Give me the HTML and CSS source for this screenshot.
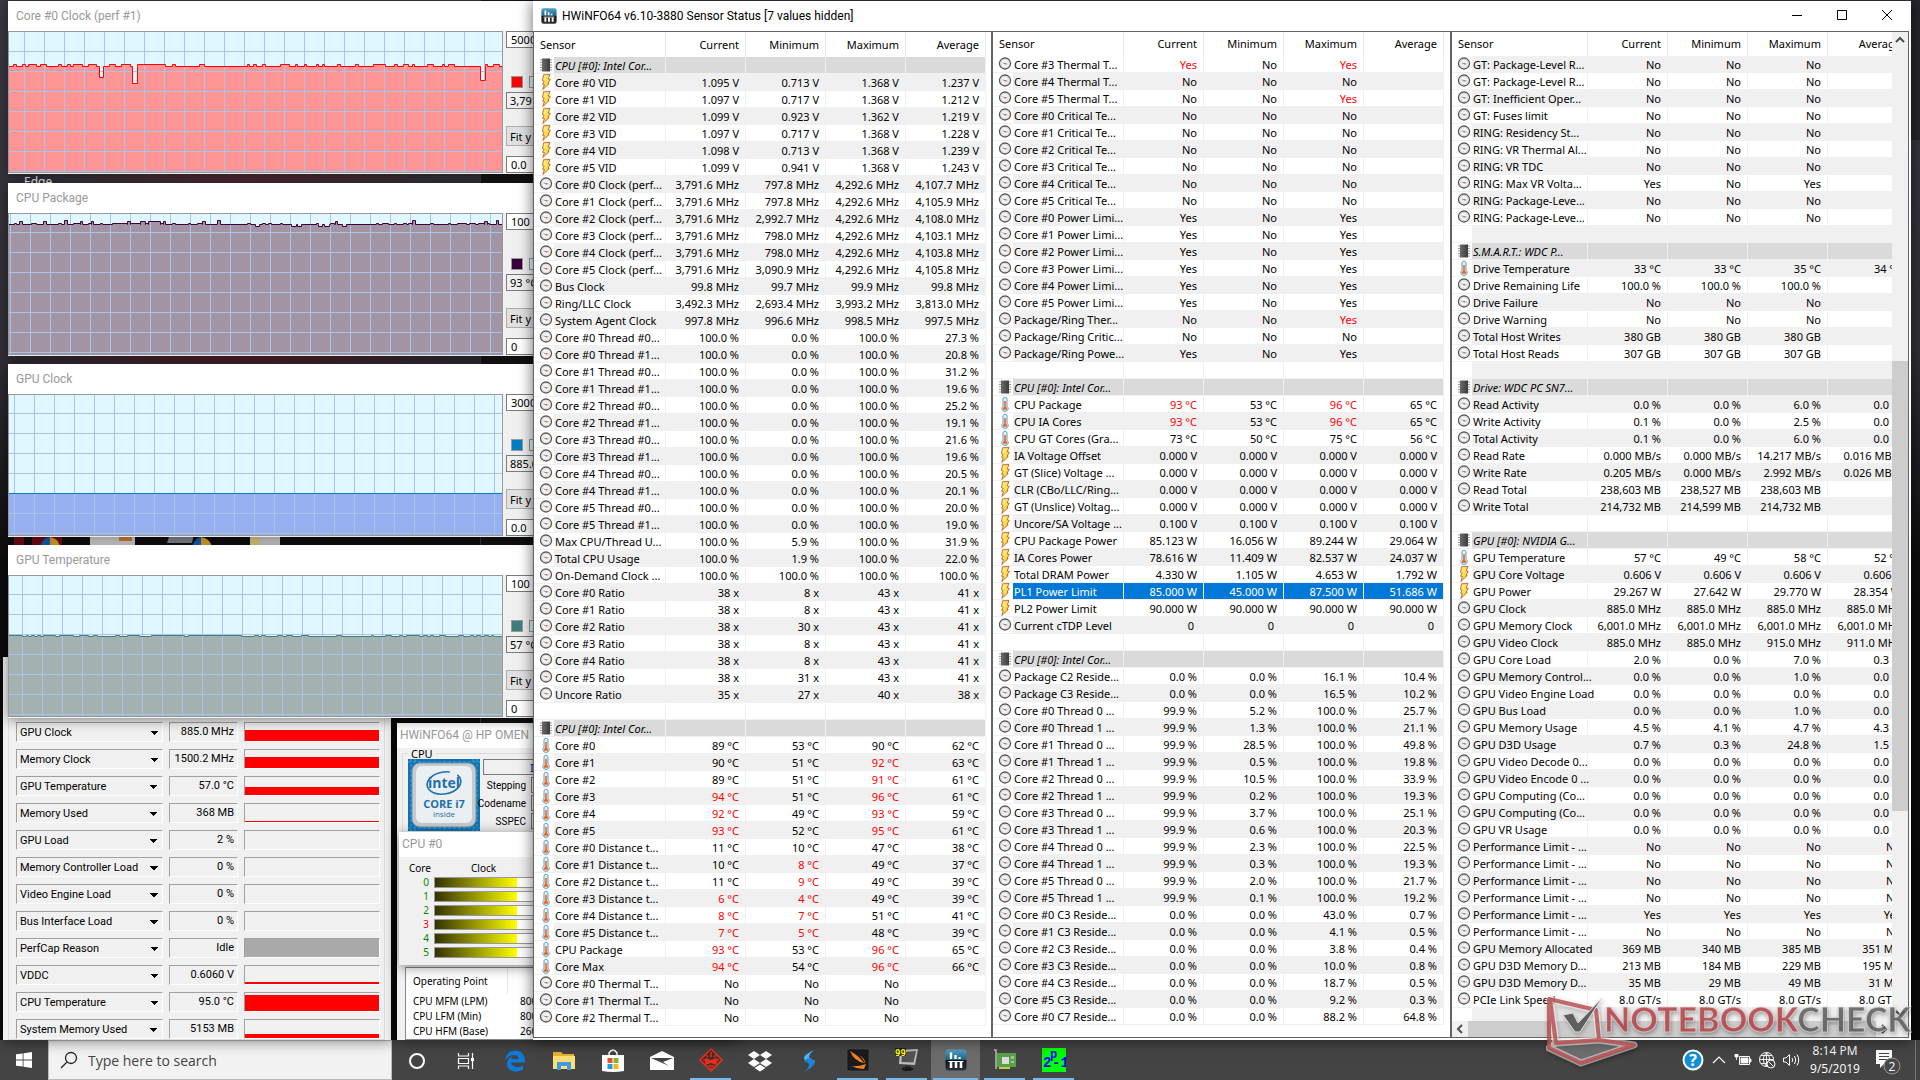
FILE: index.html
```html
<!DOCTYPE html>
<html lang="en">

<head>
    <meta charset="UTF-8">
    <meta name="viewport" content="width=device-width, initial-scale=1.0">
    <title>HWiNFO64 Sensor Status</title>
    <link rel="stylesheet" href="styles.css">
</head>

<body>
    <!-- shared icons -->
    <svg class="sprite" aria-hidden="true">
        <defs>
            <linearGradient id="chip-fill" x1="0" y1="0" x2="1" y2="0">
                <stop offset="0" stop-color="#6a6a6a" />
                <stop offset="1" stop-color="#3c3c3c" />
            </linearGradient>
            <linearGradient id="bolt-fill" x1="0" y1="0" x2="1" y2="1">
                <stop offset="0" stop-color="#fff7a0" />
                <stop offset="1" stop-color="#ffc400" />
            </linearGradient>
            <linearGradient id="app-fill" x1="0" y1="0" x2="0" y2="1">
                <stop offset="0" stop-color="#4fa3c7" />
                <stop offset=".5" stop-color="#1f5f80" />
                <stop offset=".52" stop-color="#101418" />
                <stop offset="1" stop-color="#2b3238" />
            </linearGradient>
        </defs>
        <symbol id="i-clock" viewBox="0 0 16 16">
            <circle cx="8" cy="7.5" r="5.500" fill="#f4f4f4" stroke="#555" stroke-width="1.300" />
            <circle cx="8" cy="7.5" r="4.200" fill="none" stroke="#d4d4d4" stroke-width=".8" />
            <path d="M5.500 6.800L8.500 7.900H10.500" fill="none" stroke="#8a8a8a" stroke-width=".8" />
            <circle cx="8.200" cy="7.800" r=".7" fill="#c0543c" />
        </symbol>
        <symbol id="i-volt" viewBox="0 0 16 16">
            <path d="M5.500 .8L12 .5L10.200 5L12.300 5.300L10 9.300L11.200 9.600L4.800 15.500L6.400 10.600L4.600 10.200L6.200 7.200L4.500 6.600Z"
                fill="url(#bolt-fill)" stroke="#b8622a" stroke-width=".9" />
        </symbol>
        <symbol id="i-temp" viewBox="0 0 16 16">
            <path d="M6 2.400Q8 -.4 10 2.400V10.200Q11.400 11.400 11.200 13Q10.600 15.400 8 15.400Q5.400 15.400 4.800 13Q4.600 11.400 6 10.200Z"
                fill="#e4f3fb" stroke="#5f9cc0" stroke-width="1" />
            <path d="M7.200 5H8.800V10.600L10 12V13.800H6V12L7.200 10.600Z" fill="#f0641e" />
        </symbol>
        <symbol id="i-chip" viewBox="0 0 16 16">
            <path d="M2 3H14M2 5.500H14M2 8H14M2 10.500H14M2 13H14" stroke="#999" stroke-width="1" />
            <rect x="4" y="1.500" width="8" height="13" fill="url(#chip-fill)" />
        </symbol>
        <symbol id="i-app" viewBox="0 0 22 22">
            <rect x=".5" y=".5" width="21" height="21" rx="3" fill="url(#app-fill)" />
            <path d="M6 3.500V10M10.500 6V10M14.500 8V10" stroke="#fff" stroke-width="2.400" />
            <path d="M6 13V19M11 13V19M16 13V19" stroke="#fff" stroke-width="2.600" />
            <path d="M3.500 12.500H18.500" stroke="#fff" stroke-width="1" />
        </symbol>
    </svg>

    <main class="desktop">
        <span class="shortcut-label">Edge</span>
        <svg class="shortcut-strip" width="270" height="12" aria-hidden="true">
            <path d="M0 0H10V12H0ZM18 0H48V12H18Z" fill="#7b0d18" />
            <path d="M26 12Q30 3 36 3V12Z" fill="#1468c4" />
            <path d="M36 3Q44 4 46 12H36Z" fill="#f2b42c" />
            <rect x="76" width="45" height="12" fill="#e4e4e4" />
            <rect x="105" y="3" width="13" height="4" fill="#e48a3c" />
            <path d="M156 0H180L178 9H153Z" fill="#8b9198" />
            <path d="M178 12Q182 3 187 3V12Z" fill="#1468c4" />
            <path d="M187 3Q195 4 198 12H187Z" fill="#f2b42c" />
            <rect x="236" width="10" height="12" fill="#f1dd8d" />
            <rect x="246" width="20" height="12" fill="#dcdcdc" />
        </svg>

        <!-- GPU-Z -->
        <section class="window gpuz">
            <div class="gpuz-group" id="gpuzRows"></div>
        </section>

        <!-- HWiNFO main window -->
        <section class="window summary">
            <h2 class="title inactive">HWiNFO64 @ HP OMEN</h2>
            <fieldset class="cpu-box">
                <legend>CPU</legend>
                <svg class="badge" viewBox="0 0 72 72" role="img" aria-label="Intel Core i7">
                    <rect width="72" height="72" fill="#0f74b4" />
                    <path d="M3 0V72M7 0V72M65 0V72M69 0V72M0 3H72M0 69H72" stroke="#3fa3da" stroke-width="1"
                        stroke-dasharray="3 2" />
                    <rect x="4" y="4" width="64" height="64" rx="8" fill="#c3ccd3" stroke="#7d8f9c" />
                    <rect x="8" y="7" width="56" height="57" rx="6" fill="#eceff1" />
                    <ellipse cx="36" cy="24" rx="17" ry="11" fill="none" stroke="#1a73b4" stroke-width="1.600"
                        stroke-dasharray="74 8" transform="rotate(-10 36 24)" />
                    <text x="36" y="29" class="badge-intel">intel</text>
                    <text x="36" y="49" class="badge-core">CORE i7</text>
                    <text x="36" y="58" class="badge-inside">inside</text>
                </svg>
                <div class="cpu-fields">
                    <input class="cpu-name" type="text" value="Intel" aria-label="CPU name" readonly>
                    <label>Stepping <input type="text" readonly></label>
                    <label>Codename <input type="text" readonly></label>
                    <label>SSPEC <input type="text" readonly></label>
                </div>
            </fieldset>
            <table class="points">
                <tr><th>Operating Point</th><th></th></tr>
                <tr><td>CPU MFM (LPM)</td><td>800</td></tr>
                <tr><td>CPU LFM (Min)</td><td>800</td></tr>
                <tr><td>CPU HFM (Base)</td><td>2600</td></tr>
            </table>
        </section>

        <section class="window cores">
            <h2 class="title inactive">CPU #0</h2>
            <div class="cores-body" id="coreBars">
                <span class="core-head">Core</span><span class="clock-head">Clock</span>
            </div>
        </section>

        <div id="graphs"></div>

        <!-- sensor status -->
        <section class="window sensors">
            <header class="titlebar">
                <svg class="app-icon"><use href="#i-app" /></svg>
                <h1>HWiNFO64 v6.10-3880 Sensor Status [7 values hidden]</h1>
                <button type="button" aria-label="Minimize"><svg width="12" height="12"><path d="M1 6.500H11" stroke="#000" /></svg></button>
                <button type="button" aria-label="Maximize"><svg width="12" height="12"><path d="M1.500 1.500H10.500V10.500H1.500Z" fill="none" stroke="#000" /></svg></button>
                <button type="button" aria-label="Close"><svg width="12" height="12"><path d="M1 1L11 11M11 1L1 11" stroke="#000" /></svg></button>
            </header>
            <div class="panes">
                <div class="pane pane-a"><div class="list" id="paneA"></div></div>
                <div class="pane pane-b"><div class="list" id="paneB"></div></div>
                <div class="pane pane-c">
                    <div class="list" id="paneC"></div>
                    <div class="vscroll">
                        <svg width="16" height="16"><path d="M4 10L8 6L12 10" fill="none" stroke="#505050" stroke-width="2" /></svg>
                        <div class="vthumb"></div>
                        <svg width="16" height="16"><path d="M4 6L8 10L12 6" fill="none" stroke="#505050" stroke-width="2" /></svg>
                    </div>
                    <div class="hscroll">
                        <svg width="16" height="16"><path d="M10 4L6 8L10 12" fill="none" stroke="#505050" stroke-width="2" /></svg>
                        <div class="hthumb"></div>
                        <svg width="16" height="16"><path d="M6 4L10 8L6 12" fill="none" stroke="#505050" stroke-width="2" /></svg>
                    </div>
                </div>
            </div>
        </section>

        <div class="watermark">
            <svg width="92" height="72" viewBox="0 0 92 72" aria-hidden="true">
                <path d="M3 3L50 14L53 44L88 49L35 67L3 52Z" fill="#fff" opacity=".25" />
                <g fill="none" stroke="#fff" stroke-width="7" stroke-linejoin="round" opacity=".5">
                    <path d="M3 3L50 14L53 44L10 47L4 3ZM10 47L3 52L35 67L88 49L53 44" />
                </g>
                <g fill="none" stroke="#b8484c" stroke-width="4" stroke-linejoin="round" opacity=".8">
                    <path d="M3 3L50 14L53 44L10 47L4 3ZM3 3V52L35 67L88 49L53 44" />
                </g>
                <path d="M17 19L27 17L32 27L56 2L34 36L29 36Z" fill="#5e5e5e" stroke="#ddd" />
            </svg>
            <span class="wm-text"><b>NOTEBOOK</b>CHECK</span>
        </div>
    </main>

    <footer class="taskbar">
        <button class="start" type="button" aria-label="Start">
            <svg width="16" height="16"><path d="M0 2.300L6.700 1.400V7.600H0ZM7.500 1.300L16 0V7.600H7.500ZM0 8.400H6.700V14.600L0 13.700ZM7.500 8.400H16V16L7.500 14.700Z" fill="#fff" /></svg>
        </button>
        <label class="search">
            <svg width="18" height="18"><circle cx="11" cy="7" r="5.500" fill="none" stroke="#222" stroke-width="1.300" /><path d="M7 11L1 17" stroke="#222" stroke-width="1.300" /></svg>
            <input type="text" placeholder="Type here to search" aria-label="Search">
        </label>
        <nav class="apps">
            <button type="button" aria-label="Cortana"><svg viewBox="0 0 24 24"><circle cx="12" cy="12" r="7" fill="none" stroke="#fff" stroke-width="2" /></svg></button>
            <button type="button" aria-label="Task View"><svg viewBox="0 0 24 24"><path d="M4.500 4V7H14.500V4M4.500 20V17H14.500V20M4.500 9.500H14.500V14.500H4.500ZM18.500 4V20" fill="none" stroke="#fff" stroke-width="1.200" /><path d="M17 9H20V12H17Z" fill="#fff" /></svg></button>
            <button type="button" aria-label="Edge"><svg viewBox="0 0 24 24"><path d="M2 11.500C3 4 8 1.500 12.500 1.500C18.500 1.500 21.700 6 21.700 10.500V13.500H8.300C8.600 17.800 14.500 19.600 20 16.500V20.700C14 24 4 22.800 4 14.500C4 11 6.500 8.200 9.500 6.800C8.600 7.900 8.300 9 8.200 9.900H15.500C15.500 4.500 6 4.500 2 11.500Z" fill="#0e7bdb" /></svg></button>
            <button type="button" aria-label="File Explorer"><svg viewBox="0 0 24 24"><path d="M1 3H9L11 5H22V20H1Z" fill="#e9b334" /><path d="M1 7H23V20H1Z" fill="#ffdd77" /><path d="M5 21V13H19V21H15V17H9V21Z" fill="#3f9be0" /></svg></button>
            <button type="button" aria-label="Store"><svg viewBox="0 0 24 24"><path d="M8 7V4Q12 -2 16 4V7" fill="none" stroke="#fff" stroke-width="1.400" /><path d="M1 6H23V22Q12 24 1 22Z" fill="#fff" /><path d="M6.500 9H11.500V14H6.500Z" fill="#e8502c" /><path d="M12.500 9H17.500V14H12.500Z" fill="#7fb72b" /><path d="M6.500 15H11.500V20H6.500Z" fill="#1d9fe6" /><path d="M12.500 15H17.500V20H12.500Z" fill="#fcb813" /></svg></button>
            <button type="button" aria-label="Mail"><svg viewBox="0 0 24 24"><path d="M0 8L12 2L24 8V21H0Z" fill="#fff" /><path d="M1 9H23L13 13L19 17Z" fill="#444" /></svg></button>
            <button class="running" type="button" aria-label="Omen"><svg viewBox="0 0 24 24"><path d="M12 1L23 12L12 23L1 12Z" fill="#4a2a2a" stroke="#e2311d" stroke-width="1.600" /><path d="M12 4V9M7 7L9 9M17 7L15 9M4 12H7M17 12H20M7 11L12 13L17 11V16L12 14L7 16ZM9 18H15M10.500 20.500H13.500" fill="#e2311d" stroke="#e2311d" stroke-width="1.600" /></svg></button>
            <button type="button" aria-label="Dropbox"><svg viewBox="0 0 24 24"><path d="M6 2L12 6L6 10L0 6ZM18 2L24 6L18 10L12 6ZM6 10L12 14L6 18L0 14ZM18 10L24 14L18 18L12 14ZM12 15.500L17.500 19L12 22.500L6.500 19Z" fill="#fff" /></svg></button>
            <button type="button" aria-label="Bolt"><svg viewBox="0 0 24 24"><path d="M17 1Q6 6 7 10Q8 12 14 15L18 12Q12 9 12 8Q12 5 17 1Z" fill="#4db8f8" /><path d="M7 23Q18 17 18 13Q17 11 11 9L7 12Q13 14 12 16Q12 19 7 23Z" fill="#1d83dc" /></svg></button>
            <button class="running" type="button" aria-label="3DMark"><svg viewBox="0 0 24 24"><rect x="1" y="1" width="22" height="22" fill="#1c1b1b" stroke="#555" stroke-width=".6" /><path d="M4 3Q8 13 18 15Q13 8 4 3ZM13 7Q18 11 19 16Q20 11 13 7ZM5 18Q12 19 20 16L18 21Q11 21 5 18Z" fill="#f58220" /></svg></button>
            <button class="running" type="button" aria-label="RivaTuner"><svg viewBox="0 0 24 24"><path d="M5 2L23 1L20 17L4 16Z" fill="#b9bdc0" /><path d="M7 4L21 3L18.500 14.500L6.500 14Z" fill="#505457" /><path d="M10 17H15V20H10Z" fill="#333" /><ellipse cx="12.500" cy="21" rx="6" ry="2" fill="#1b1b1b" /><rect width="11" height="8" fill="#222" /><text x="0" y="8" class="fps">99</text></svg></button>
            <button class="running active" type="button" aria-label="HWiNFO64"><svg viewBox="0 0 24 24"><use href="#i-app" x="1" y="1" width="22" height="22" /></svg></button>
            <button class="running" type="button" aria-label="GPU-Z"><svg viewBox="0 0 24 24"><path d="M1 2H3V21" fill="none" stroke="#bbb" stroke-width="1.500" /><rect x="4" y="5" width="19" height="14" fill="#58a04c" /><rect x="6" y="19" width="11" height="2" fill="#c8cf40" /><rect x="9" y="9" width="7" height="7" fill="#dcdcdc" /><path d="M18 8H21V11H18ZM18 13H21V15H18Z" fill="#9bc794" /></svg></button>
            <button class="running" type="button" aria-label="Prime95"><svg viewBox="0 0 24 24"><rect width="24" height="24" fill="#0f0" /><text x="1" y="19" class="prime">2</text><text x="8" y="10" class="prime small">p</text><text x="10" y="19" class="prime">-1</text></svg></button>
        </nav>
        <div class="tray">
            <svg class="help" width="22" height="22"><circle cx="11" cy="11" r="9.500" fill="#1290d8" stroke="#fff" stroke-width="2" /><text x="11" y="17" class="help-mark">?</text></svg>
            <svg width="18" height="14"><path d="M3 10L9 4L15 10" fill="none" stroke="#fff" stroke-width="1.200" /></svg>
            <svg width="18" height="16"><path d="M5.500 4.500H15.500V12.500H5.500Z" fill="none" stroke="#fff" /><path d="M7 6H14V11H7ZM16 7H17V10H16ZM1 2V5H4V2M2.500 5V8" fill="#fff" stroke="#fff" stroke-width=".8" /></svg>
            <svg width="18" height="18"><circle cx="8.500" cy="8.500" r="7" fill="none" stroke="#fff" /><path d="M1.500 8.500H15.500M8.500 1.500V15.500M8.500 1.500Q2 8.500 8.500 15.500M8.500 1.500Q15 8.500 8.500 15.500M3 4.500H14M3 12.500H9" fill="none" stroke="#fff" stroke-width=".9" /><circle cx="13" cy="13" r="4" fill="#444" stroke="#fff" /><path d="M10.500 10.500L15.500 15.500" stroke="#fff" /></svg>
            <svg width="18" height="16"><path d="M1.500 6H4L7.500 2.500V13.500L4 10H1.500ZM10 6Q11.500 8 10 10M12.500 4Q15 8 12.500 12M15 2.500Q18.500 8 15 13.500" fill="none" stroke="#fff" /></svg>
            <div class="time"><span>8:14 PM</span><span>9/5/2019</span></div>
            <svg class="notes" width="26" height="28"><path d="M1 2H17V16H9L5 20V16H1Z" fill="#fff" /><path d="M4 5.500H14M4 8.500H14M4 11.500H14" stroke="#444" /><circle cx="17" cy="18" r="8" fill="#484848" stroke="#999" /><text x="17" y="23" class="notes-count">2</text></svg>
            <span class="peek"></span>
        </div>
    </footer>

    <script src="script.js"></script>
</body>

</html>
```
FILE: styles.css
```css
* {
    box-sizing: border-box;
}

body {
    margin: 0;
    height: 100vh;
    display: flex;
    flex-direction: column;
    overflow: hidden;
    font-family: "Noto Sans", "Open Sans", sans-serif;
    font-size: 11px;
    color: #000;
    background: #0b0a0c;
}

h1,
h2 {
    margin: 0;
    font-weight: 400;
}

button {
    font-family: inherit;
    padding: 0;
    border: none;
    background: none;
}

.sprite {
    position: absolute;
    width: 0;
    height: 0;
}

/* desktop */
.desktop {
    position: relative;
    flex: 1;
    min-height: 0;
    overflow: hidden;
    background:
        linear-gradient(#26252d, #26252d) right top / 9px 140px no-repeat,
        linear-gradient(90deg, transparent 480px, #3a3a3a 480px, #3a3a3a 481px, #161616 481px, #161616 533px, transparent 533px),
        radial-gradient(200px 8px at 250px 179px, #5a2a33, transparent),
        radial-gradient(220px 8px at 240px 359px, #5a1f28, transparent),
        linear-gradient(180deg, #3a3743 0, #332f38 350px, #0e0c0e 560px, #0a0a0a 100%);
}

.shortcut-label {
    position: absolute;
    left: 24px;
    top: 173px;
    font-size: 12px;
    color: #fff;
}

.shortcut-strip {
    position: absolute;
    left: 14px;
    top: 534px;
}

.window {
    position: absolute;
    background: #f0f0f0;
    box-shadow: 0 2px 12px rgba(0, 0, 0, .45);
    overflow: hidden;
}

.title {
    height: 30px;
    padding-left: 8px;
    font-family: Roboto, sans-serif;
    font-size: 12px;
    line-height: 30px;
    white-space: nowrap;
    background: #fff;
}

.inactive {
    color: #999;
}

/* graph windows */
.graph {
    left: 8px;
    width: 540px;
    height: 173px;
}

.graph-body {
    display: flex;
    gap: 3px;
}

.plot {
    flex: none;
    width: 495px;
    height: 142px;
    border: 1px solid #999;
    background: #e0f7ff;
}

.plot svg {
    display: block;
    width: 100%;
    height: 100%;
}

.plot-side {
    display: flex;
    flex: none;
    flex-direction: column;
    width: 90px;
}

.plot-side input {
    width: 90px;
    height: 17px;
    padding: 0 4px;
    border: 1px solid #7a7a7a;
    font-family: inherit;
    font-size: 11px;
    background: #fff;
}

.plot-side .now {
    padding: 0 3px;
    background: #f0f0f0;
}

.swatches {
    display: flex;
    gap: 6px;
    padding: 28px 0 4px 5px;
}

.swatches span {
    width: 12px;
    height: 12px;
    border: 1px solid #999;
    background: #e0f7ff;
}

.plot-side button {
    width: 60px;
    height: 20px;
    margin: 17px 0 10px;
    padding-left: 3px;
    border: 1px solid #adadad;
    font-size: 11px;
    text-align: left;
    background: #e1e1e1;
}

/* gpu-z */
.gpuz {
    left: 3px;
    top: 657px;
    bottom: 0;
    width: 388px;
    padding: 30px 6px 0 5px;
}

.gpuz-group {
    display: grid;
    gap: 7px;
    padding: 34px 4px 0 7px;
    border: 1px solid #dcdcdc;
}

.gpuz-row {
    display: grid;
    grid-template-columns: 147px 69px 1fr;
    gap: 6px;
    height: 20px;
    font-family: Roboto, sans-serif;
    font-size: 11px;
}

.gpuz-row > * {
    border: 1px solid;
    border-color: #a0a0a0 #fff #fff #a0a0a0;
}

.gpuz-row select {
    appearance: none;
    width: 100%;
    padding: 0 3px;
    border-radius: 0;
    font-family: inherit;
    font-size: 11px;
    color: #000;
    background:
        linear-gradient(45deg, transparent 50%, #000 50%) 133px 8px / 4px 4px no-repeat,
        linear-gradient(-45deg, transparent 50%, #000 50%) 137px 8px / 4px 4px no-repeat,
        #f0f0f0;
}

.gpuz-row output {
    padding-right: 3px;
    line-height: 18px;
    text-align: right;
}

.gauge {
    display: flex;
    align-items: flex-end;
}

.gauge i {
    width: 100%;
    background: red;
}

.gauge .idle {
    background: #a9a9a9;
}

/* hwinfo summary */
.summary {
    left: 397px;
    top: 723px;
    bottom: 0;
    width: 340px;
}

.summary .title {
    height: 25px;
    padding-left: 3px;
    line-height: 24px;
}

.cpu-box {
    display: flex;
    height: 86px;
    margin: 0 5px;
    padding: 0 5px;
    border: 1px solid #dcdcdc;
}

.cpu-box legend {
    padding: 0 3px;
    line-height: 11px;
}

.badge {
    width: 72px;
    height: 72px;
}

.badge text {
    text-anchor: middle;
    font-family: "Open Sans", sans-serif;
    fill: #1a6fae;
}

.badge-intel {
    font-size: 14px;
    font-weight: 700;
}

.badge-core {
    font-size: 11px;
    font-weight: 700;
}

.badge-inside {
    font-size: 8px;
}

.cpu-fields {
    display: grid;
    grid-template-rows: 17px 18px 18px 18px;
    padding-left: 3px;
}

.cpu-fields input {
    width: 160px;
    height: 16px;
    border: 1px solid #7a7a7a;
    padding: 0 0 0 46px;
    font-family: inherit;
    font-size: 11px;
    color: #00c;
    background: #f0f0f0;
}

.cpu-fields label {
    display: grid;
    grid-template-columns: 43px 160px;
    gap: 5px;
    align-items: center;
    justify-items: end;
    font-family: Roboto, sans-serif;
    font-size: 10px;
}

.points {
    width: 300px;
    margin: 133px 0 0 8px;
    border: 1px solid #828790;
    border-spacing: 0;
    table-layout: fixed;
    background: #fff;
}

.points th,
.points td {
    height: 15px;
    padding: 0 0 0 7px;
    font-size: 10px;
    font-weight: 400;
    line-height: 15px;
    text-align: left;
}

.points th {
    height: 26px;
    border-right: 1px solid #e5e5e5;
}

.points th:first-child {
    width: 102px;
}

.points td + td {
    padding-left: 12px;
}

/* per core clocks */
.cores {
    left: 399px;
    top: 832px;
    width: 300px;
    height: 133px;
}

.cores .title {
    height: 25px;
    padding-left: 3px;
    line-height: 24px;
}

.cores-body {
    display: grid;
    grid-template-columns: 20px 160px;
    grid-template-rows: 17px;
    grid-auto-rows: 11px;
    gap: 3px 5px;
    padding-left: 10px;
    font-size: 10px;
    line-height: 11px;
}

.core-head,
.clock-head {
    line-height: 22px;
}

.clock-head {
    padding-left: 37px;
}

.core-no {
    text-align: right;
    color: #008c00;
}

.core-no.hot {
    color: red;
}

.core-bar {
    border: 1px solid #999;
    background: linear-gradient(90deg, #330 0, #ff0 82px, #fff 82px);
}

/* sensor window */
.sensors {
    left: 533px;
    right: 9px;
    top: 1px;
    bottom: 0;
    display: flex;
    flex-direction: column;
    padding: 0 2px 2px 0;
    background: #fff;
    box-shadow: 0 0 14px rgba(0, 0, 0, .6);
}

.titlebar {
    display: flex;
    align-items: center;
    height: 30px;
    padding-left: 8px;
}

.app-icon {
    width: 16px;
    height: 16px;
    margin-right: 5px;
}

.titlebar h1 {
    flex: 1;
    font-family: Roboto, sans-serif;
    font-size: 12px;
}

.titlebar button {
    width: 45px;
    height: 30px;
}

.panes {
    flex: 1;
    min-height: 0;
    display: grid;
    grid-template-columns: 458fr 459fr 459fr;
    grid-template-rows: minmax(0, 1fr);
    border-top: 1px solid #646464;
    border-bottom: 1px solid #646464;
}

.pane {
    min-width: 0;
    border-left: 2px solid #646464;
    overflow: hidden;
}

.pane-a {
    border-left-width: 1px;
}

.list {
    min-width: 0;
    overflow: hidden;
}

.sensor-table {
    width: 452px;
    border-spacing: 0;
    table-layout: fixed;
}

.sensor-table th {
    height: 24px;
    padding: 0 6px 0 0;
    border-right: 1px solid #e5e5e5;
    font-weight: 400;
    line-height: 22px;
    text-align: right;
}

.pane-a .sensor-table th {
    height: 25px;
}

.sensor-table th:first-child {
    padding-left: 6px;
    text-align: left;
}

.col-icon {
    width: 20px;
}

.col-name {
    width: 112px;
}

.pane-b .col-name {
    width: 111px;
}

.pane-b .sensor-table {
    width: 451px;
}

.pane-c .col-name {
    width: 116px;
}

.pane-c .sensor-table {
    width: 456px;
}

.sensor-table td {
    height: 17px;
    padding: 1px 6px 0 0;
    border-right: 1px solid #f0f0f0;
    border-bottom: 1px solid #f0f0f0;
    line-height: 15px;
    text-align: right;
    white-space: nowrap;
}

.sensor-table .icon {
    padding: 0 0 0 4px;
    border-right: none;
    background: #fff;
}

.icon svg {
    display: block;
    width: 16px;
    height: 16px;
}

.sensor-table .name {
    padding-left: 1px;
    padding-right: 0;
    text-align: left;
}

.shade td {
    background: #f0f0f0;
}

.group td {
    background: #dadada;
}

.group .name {
    font-style: italic;
}

.selected td {
    color: #fff;
    background: #0078d7;
}

.sensor-table .hot {
    color: red;
}

.pane-c {
    display: grid;
    grid-template-columns: minmax(0, 1fr) 16px;
    grid-template-rows: minmax(0, 1fr) 16px;
    border-right: 1px solid #646464;
}

.vscroll,
.hscroll {
    display: flex;
    background: #f0f0f0;
}

.vscroll {
    flex-direction: column;
}

.hscroll {
    grid-column: span 2;
    padding-right: 16px;
}

.vthumb {
    flex: 1;
    margin: 313px 0 194px;
    background: #cdcdcd;
}

.hthumb {
    flex: 1;
    background: #cdcdcd;
}

.watermark {
    position: absolute;
    right: 9px;
    bottom: -28px;
    z-index: 5;
    height: 72px;
    display: flex;
    filter: drop-shadow(1px 2px 2px rgba(0, 0, 0, .4));
}

.wm-text {
    margin-left: -34px;
    padding-top: 3px;
    font-family: Lato, sans-serif;
    font-size: 34px;
    font-weight: 900;
    line-height: 40px;
    color: rgba(90, 90, 90, .8);
    -webkit-text-stroke: 1px rgba(235, 235, 235, .6);
}

.wm-text b {
    font-weight: 900;
    color: rgba(185, 70, 75, .85);
}

/* taskbar */
.taskbar {
    position: relative;
    display: flex;
    height: 40px;
    color: #fff;
    background: #444;
}

/* the watermark hangs over the taskbar */
.desktop {
    overflow: visible;
    z-index: 1;
}

.start {
    width: 48px;
    height: 40px;
}

.start svg {
    display: block;
    margin: 0 auto;
}

.search {
    display: flex;
    align-items: center;
    gap: 8px;
    width: 344px;
    padding-left: 11px;
    border: 1px solid #bbb;
    background: #f2f2f2;
}

.search input {
    flex: 1;
    min-width: 0;
    border: none;
    font-family: "Open Sans", sans-serif;
    font-size: 14px;
    background: none;
}

.search input::placeholder {
    color: #444;
}

.apps {
    display: flex;
    flex: 1;
}

.apps button {
    width: 49px;
    height: 40px;
    padding: 0 4px;
}

.apps svg {
    display: block;
    width: 24px;
    height: 24px;
    margin: 8px auto 6px;
}

.running::after {
    content: "";
    display: block;
    height: 2px;
    background: #76b9ed;
}

.apps .active {
    padding: 0 2px;
    background: #6c6c6c;
}

.fps {
    font: 700 9px "DejaVu Sans Mono", monospace;
    fill: #ff0;
}

.prime {
    font: 700 14px "Liberation Mono", monospace;
    fill: #00f;
}

.prime.small {
    font-size: 12px;
}

.tray {
    display: flex;
    align-items: center;
    gap: 6px;
}

.help-mark {
    font: 700 16px "Open Sans", sans-serif;
    text-anchor: middle;
    fill: #fff;
}

.time {
    display: flex;
    flex-direction: column;
    width: 58px;
    font-family: "Open Sans", sans-serif;
    font-size: 12px;
    line-height: 18px;
    text-align: center;
}

.notes {
    margin: 4px 8px 0 5px;
}

.notes-count {
    font: 12px "Open Sans", sans-serif;
    text-anchor: middle;
    fill: #fff;
}

.peek {
    width: 5px;
    height: 40px;
    border-left: 1px solid #777;
}
```
FILE: script.js
```js
// icon | name | current | minimum | maximum | average   (! marks a value over its limit)
const paneA = `
chip|CPU [#0]: Intel Cor...
volt|Core #0 VID|1.095 V|0.713 V|1.368 V|1.237 V
volt|Core #1 VID|1.097 V|0.717 V|1.368 V|1.212 V
volt|Core #2 VID|1.099 V|0.923 V|1.362 V|1.219 V
volt|Core #3 VID|1.097 V|0.717 V|1.368 V|1.228 V
volt|Core #4 VID|1.098 V|0.713 V|1.368 V|1.239 V
volt|Core #5 VID|1.099 V|0.941 V|1.368 V|1.243 V
clock|Core #0 Clock (perf...|3,791.6 MHz|797.8 MHz|4,292.6 MHz|4,107.7 MHz
clock|Core #1 Clock (perf...|3,791.6 MHz|797.8 MHz|4,292.6 MHz|4,105.9 MHz
clock|Core #2 Clock (perf...|3,791.6 MHz|2,992.7 MHz|4,292.6 MHz|4,108.0 MHz
clock|Core #3 Clock (perf...|3,791.6 MHz|798.0 MHz|4,292.6 MHz|4,103.1 MHz
clock|Core #4 Clock (perf...|3,791.6 MHz|798.0 MHz|4,292.6 MHz|4,103.8 MHz
clock|Core #5 Clock (perf...|3,791.6 MHz|3,090.9 MHz|4,292.6 MHz|4,105.8 MHz
clock|Bus Clock|99.8 MHz|99.7 MHz|99.9 MHz|99.8 MHz
clock|Ring/LLC Clock|3,492.3 MHz|2,693.4 MHz|3,993.2 MHz|3,813.0 MHz
clock|System Agent Clock|997.8 MHz|996.6 MHz|998.5 MHz|997.5 MHz
clock|Core #0 Thread #0...|100.0 %|0.0 %|100.0 %|27.3 %
clock|Core #0 Thread #1...|100.0 %|0.0 %|100.0 %|20.8 %
clock|Core #1 Thread #0...|100.0 %|0.0 %|100.0 %|31.2 %
clock|Core #1 Thread #1...|100.0 %|0.0 %|100.0 %|19.6 %
clock|Core #2 Thread #0...|100.0 %|0.0 %|100.0 %|25.2 %
clock|Core #2 Thread #1...|100.0 %|0.0 %|100.0 %|19.1 %
clock|Core #3 Thread #0...|100.0 %|0.0 %|100.0 %|21.6 %
clock|Core #3 Thread #1...|100.0 %|0.0 %|100.0 %|19.6 %
clock|Core #4 Thread #0...|100.0 %|0.0 %|100.0 %|20.5 %
clock|Core #4 Thread #1...|100.0 %|0.0 %|100.0 %|20.1 %
clock|Core #5 Thread #0...|100.0 %|0.0 %|100.0 %|20.0 %
clock|Core #5 Thread #1...|100.0 %|0.0 %|100.0 %|19.0 %
clock|Max CPU/Thread U...|100.0 %|5.9 %|100.0 %|31.9 %
clock|Total CPU Usage|100.0 %|1.9 %|100.0 %|22.0 %
clock|On-Demand Clock ...|100.0 %|100.0 %|100.0 %|100.0 %
clock|Core #0 Ratio|38 x|8 x|43 x|41 x
clock|Core #1 Ratio|38 x|8 x|43 x|41 x
clock|Core #2 Ratio|38 x|30 x|43 x|41 x
clock|Core #3 Ratio|38 x|8 x|43 x|41 x
clock|Core #4 Ratio|38 x|8 x|43 x|41 x
clock|Core #5 Ratio|38 x|31 x|43 x|41 x
clock|Uncore Ratio|35 x|27 x|40 x|38 x
-
chip|CPU [#0]: Intel Cor...
temp|Core #0|89 °C|53 °C|90 °C|62 °C
temp|Core #1|90 °C|51 °C|!92 °C|63 °C
temp|Core #2|89 °C|51 °C|!91 °C|61 °C
temp|Core #3|!94 °C|51 °C|!96 °C|61 °C
temp|Core #4|!92 °C|49 °C|!93 °C|59 °C
temp|Core #5|!93 °C|52 °C|!95 °C|61 °C
temp|Core #0 Distance t...|11 °C|10 °C|47 °C|38 °C
temp|Core #1 Distance t...|10 °C|!8 °C|49 °C|37 °C
temp|Core #2 Distance t...|11 °C|!9 °C|49 °C|39 °C
temp|Core #3 Distance t...|!6 °C|!4 °C|49 °C|39 °C
temp|Core #4 Distance t...|!8 °C|!7 °C|51 °C|41 °C
temp|Core #5 Distance t...|!7 °C|!5 °C|48 °C|39 °C
temp|CPU Package|!93 °C|53 °C|!96 °C|65 °C
temp|Core Max|!94 °C|54 °C|!96 °C|66 °C
clock|Core #0 Thermal T...|No|No|No|
clock|Core #1 Thermal T...|No|No|No|
clock|Core #2 Thermal T...|No|No|No|
`;

const paneB = `
clock|Core #3 Thermal T...|!Yes|No|!Yes|
clock|Core #4 Thermal T...|No|No|No|
clock|Core #5 Thermal T...|No|No|!Yes|
clock|Core #0 Critical Te...|No|No|No|
clock|Core #1 Critical Te...|No|No|No|
clock|Core #2 Critical Te...|No|No|No|
clock|Core #3 Critical Te...|No|No|No|
clock|Core #4 Critical Te...|No|No|No|
clock|Core #5 Critical Te...|No|No|No|
clock|Core #0 Power Limi...|Yes|No|Yes|
clock|Core #1 Power Limi...|Yes|No|Yes|
clock|Core #2 Power Limi...|Yes|No|Yes|
clock|Core #3 Power Limi...|Yes|No|Yes|
clock|Core #4 Power Limi...|Yes|No|Yes|
clock|Core #5 Power Limi...|Yes|No|Yes|
clock|Package/Ring Ther...|No|No|!Yes|
clock|Package/Ring Critic...|No|No|No|
clock|Package/Ring Powe...|Yes|No|Yes|
-
chip|CPU [#0]: Intel Cor...
temp|CPU Package|!93 °C|53 °C|!96 °C|65 °C
temp|CPU IA Cores|!93 °C|53 °C|!96 °C|65 °C
temp|CPU GT Cores (Gra...|73 °C|50 °C|75 °C|56 °C
volt|IA Voltage Offset|0.000 V|0.000 V|0.000 V|0.000 V
volt|GT (Slice) Voltage ...|0.000 V|0.000 V|0.000 V|0.000 V
volt|CLR (CBo/LLC/Ring...|0.000 V|0.000 V|0.000 V|0.000 V
volt|GT (Unslice) Voltag...|0.000 V|0.000 V|0.000 V|0.000 V
volt|Uncore/SA Voltage ...|0.100 V|0.100 V|0.100 V|0.100 V
volt|CPU Package Power|85.123 W|16.056 W|89.244 W|29.064 W
volt|IA Cores Power|78.616 W|11.409 W|82.537 W|24.037 W
volt|Total DRAM Power|4.330 W|1.105 W|4.653 W|1.792 W
volt|*PL1 Power Limit|85.000 W|45.000 W|87.500 W|51.686 W
volt|PL2 Power Limit|90.000 W|90.000 W|90.000 W|90.000 W
clock|Current cTDP Level|0&nbsp;|0&nbsp;|0&nbsp;|0&nbsp;
-
chip|CPU [#0]: Intel Cor...
clock|Package C2 Reside...|0.0 %|0.0 %|16.1 %|10.4 %
clock|Package C3 Reside...|0.0 %|0.0 %|16.5 %|10.2 %
clock|Core #0 Thread 0 ...|99.9 %|5.2 %|100.0 %|25.7 %
clock|Core #0 Thread 1 ...|99.9 %|1.3 %|100.0 %|21.1 %
clock|Core #1 Thread 0 ...|99.9 %|28.5 %|100.0 %|49.8 %
clock|Core #1 Thread 1 ...|99.9 %|0.5 %|100.0 %|19.8 %
clock|Core #2 Thread 0 ...|99.9 %|10.5 %|100.0 %|33.9 %
clock|Core #2 Thread 1 ...|99.9 %|0.2 %|100.0 %|19.3 %
clock|Core #3 Thread 0 ...|99.9 %|3.7 %|100.0 %|25.1 %
clock|Core #3 Thread 1 ...|99.9 %|0.6 %|100.0 %|20.3 %
clock|Core #4 Thread 0 ...|99.9 %|2.3 %|100.0 %|22.5 %
clock|Core #4 Thread 1 ...|99.9 %|0.3 %|100.0 %|19.3 %
clock|Core #5 Thread 0 ...|99.9 %|2.0 %|100.0 %|21.7 %
clock|Core #5 Thread 1 ...|99.9 %|0.1 %|100.0 %|19.2 %
clock|Core #0 C3 Reside...|0.0 %|0.0 %|43.0 %|0.7 %
clock|Core #1 C3 Reside...|0.0 %|0.0 %|4.1 %|0.5 %
clock|Core #2 C3 Reside...|0.0 %|0.0 %|3.8 %|0.4 %
clock|Core #3 C3 Reside...|0.0 %|0.0 %|10.0 %|0.8 %
clock|Core #4 C3 Reside...|0.0 %|0.0 %|18.7 %|0.5 %
clock|Core #5 C3 Reside...|0.0 %|0.0 %|9.2 %|0.3 %
clock|Core #0 C7 Reside...|0.0 %|0.0 %|88.2 %|64.8 %
`;

const paneC = `
clock|GT: Package-Level R...|No|No|No|
clock|GT: Package-Level R...|No|No|No|
clock|GT: Inefficient Oper...|No|No|No|
clock|GT: Fuses limit|No|No|No|
clock|RING: Residency St...|No|No|No|
clock|RING: VR Thermal Al...|No|No|No|
clock|RING: VR TDC|No|No|No|
clock|RING: Max VR Volta...|Yes|No|Yes|
clock|RING: Package-Leve...|No|No|No|
clock|RING: Package-Leve...|No|No|No|
-
chip|S.M.A.R.T.: WDC P...
temp|Drive Temperature|33 °C|33 °C|35 °C|34 °C
clock|Drive Remaining Life|100.0 %|100.0 %|100.0 %|
clock|Drive Failure|No|No|No|
clock|Drive Warning|No|No|No|
clock|Total Host Writes|380 GB|380 GB|380 GB|
clock|Total Host Reads|307 GB|307 GB|307 GB|
-
chip|Drive: WDC PC SN7...
clock|Read Activity|0.0 %|0.0 %|6.0 %|0.0 %
clock|Write Activity|0.1 %|0.0 %|2.5 %|0.0 %
clock|Total Activity|0.1 %|0.0 %|6.0 %|0.0 %
clock|Read Rate|0.000 MB/s|0.000 MB/s|14.217 MB/s|0.016 MB/s
clock|Write Rate|0.205 MB/s|0.000 MB/s|2.992 MB/s|0.026 MB/s
clock|Read Total|238,603 MB|238,527 MB|238,603 MB|
clock|Write Total|214,732 MB|214,599 MB|214,732 MB|
-
chip|GPU [#0]: NVIDIA G...
temp|GPU Temperature|57 °C|49 °C|58 °C|52 °C
volt|GPU Core Voltage|0.606 V|0.606 V|0.606 V|0.606 V
volt|GPU Power|29.267 W|27.642 W|29.770 W|28.354 W
clock|GPU Clock|885.0 MHz|885.0 MHz|885.0 MHz|885.0 MHz
clock|GPU Memory Clock|6,001.0 MHz|6,001.0 MHz|6,001.0 MHz|6,001.0 MHz
clock|GPU Video Clock|885.0 MHz|885.0 MHz|915.0 MHz|911.0 MHz
clock|GPU Core Load|2.0 %|0.0 %|7.0 %|0.3 %
clock|GPU Memory Control...|0.0 %|0.0 %|1.0 %|0.0 %
clock|GPU Video Engine Load|0.0 %|0.0 %|0.0 %|0.0 %
clock|GPU Bus Load|0.0 %|0.0 %|1.0 %|0.0 %
clock|GPU Memory Usage|4.5 %|4.1 %|4.7 %|4.3 %
clock|GPU D3D Usage|0.7 %|0.3 %|24.8 %|1.5 %
clock|GPU Video Decode 0...|0.0 %|0.0 %|0.0 %|0.0 %
clock|GPU Video Encode 0 ...|0.0 %|0.0 %|0.0 %|0.0 %
clock|GPU Computing (Co...|0.0 %|0.0 %|0.0 %|0.0 %
clock|GPU Computing (Co...|0.0 %|0.0 %|0.0 %|0.0 %
clock|GPU VR Usage|0.0 %|0.0 %|0.0 %|0.0 %
clock|Performance Limit - ...|No|No|No|No
clock|Performance Limit - ...|No|No|No|No
clock|Performance Limit - ...|No|No|No|No
clock|Performance Limit - ...|No|No|No|No
clock|Performance Limit - ...|Yes|Yes|Yes|Yes
clock|Performance Limit - ...|No|No|No|No
clock|GPU Memory Allocated|369 MB|340 MB|385 MB|351 MB
clock|GPU D3D Memory D...|213 MB|184 MB|229 MB|195 MB
clock|GPU D3D Memory D...|35 MB|29 MB|49 MB|31 MB
clock|PCIe Link Speed|8.0 GT/s|8.0 GT/s|8.0 GT/s|8.0 GT/s
-
`;

function renderPane(id, text, shadeOn) {
    const rows = text.trim().split('\n').map((line, i) => {
        const [icon, rawName = '', ...values] = line.split('|');
        const name = rawName.replace('*', '');
        let cls = i % 2 === shadeOn ? 'shade' : '';
        if (icon === 'chip') cls = 'group';
        if (rawName.startsWith('*')) cls = 'selected';

        const svg = icon === '-' ? '' : `<svg><use href="#i-${icon}"/></svg>`;
        let cells = '';
        for (let c = 0; c < 4; c++) {
            const v = values[c] || '';
            cells += v.startsWith('!') ? `<td class="hot">${v.slice(1)}</td>` : `<td>${v}</td>`;
        }
        return `<tr class="${cls}"><td class="icon">${svg}</td><td class="name">${name}</td>${cells}</tr>`;
    });

    document.getElementById(id).innerHTML = `
        <table class="sensor-table">
            <colgroup><col class="col-icon"><col class="col-name"><col><col><col><col></colgroup>
            <thead><tr><th colspan="2">Sensor</th><th>Current</th><th>Minimum</th><th>Maximum</th><th>Average</th></tr></thead>
            <tbody>${rows.join('')}</tbody>
        </table>`;
}

renderPane('paneA', paneA, 1);
renderPane('paneB', paneB, 1);
renderPane('paneC', paneC, 0);

// graph windows: steps are [from, to, y], everything else stays on the base line
const at = (y, pairs) => pairs.map(([a, b]) => [a, b, y]);

const graphs = [
    {
        title: 'Core #0 Clock (perf #1)', top: 1, max: '5000.0', now: '3,791.6 MHz', min: '0.0',
        line: '#ff0000', fill: '#ff9494', base: 34, gridX: 15, gridY: 19,
        steps: [
            ...at(32, [[4, 7], [13, 16], [19, 27], [31, 37], [49, 52], [58, 61], [64, 73], [79, 87], [100, 106],
                [112, 121], [128, 156], [163, 166], [190, 195], [238, 240], [244, 247], [253, 256], [271, 280],
                [286, 288], [295, 297], [307, 309], [313, 315], [328, 331], [346, 349], [364, 376], [385, 388],
                [394, 399], [403, 405], [418, 424], [433, 435], [439, 445], [476, 478], [484, 490]]),
            [90, 94, 45], [123, 128, 51], [471, 476, 48]
        ]
    },
    {
        title: 'CPU Package', top: 183, max: '100', now: '93 °C', min: '0',
        line: '#3c003c', fill: '#a394a4', base: 10, gridX: 1, gridY: 18,
        steps: [
            ...at(9, [[5, 7], [22, 27], [49, 52], [64, 71], [79, 82], [91, 93], [103, 118], [121, 131], [136, 139],
                [151, 154], [163, 166], [179, 181], [188, 193], [238, 241], [253, 256], [259, 262], [271, 273],
                [307, 309], [321, 325], [367, 369], [373, 379], [385, 387], [394, 397], [399, 403], [421, 424],
                [439, 441], [448, 457], [460, 466], [469, 475], [478, 480]]),
            ...at(7, [[10, 13], [34, 37], [71, 73], [82, 84], [118, 121], [131, 136], [139, 151], [154, 156],
                [193, 196], [326, 328], [475, 478]]),
            ...at(6, [[55, 58], [208, 211], [403, 406], [487, 489]]),
            ...at(12, [[246, 250], [282, 287], [288, 292], [309, 313], [315, 320], [333, 337]])
        ]
    },
    {
        title: 'GPU Clock', top: 364, max: '3000.0', now: '885.0 MHz', min: '0.0',
        line: '#007fc4', fill: '#96b0f2', base: 98, gridX: 5, gridY: 18, steps: []
    },
    {
        title: 'GPU Temperature', top: 545, max: '100', now: '57 °C', min: '0',
        line: '#3f7f7f', fill: '#a3b1b0', base: 59, gridX: 13, gridY: 18,
        steps: at(60, [[13, 17], [19, 22], [25, 28], [31, 34], [46, 50], [64, 70], [79, 84], [88, 106], [110, 118],
            [130, 142], [175, 179], [232, 245], [249, 252], [256, 268], [273, 277], [283, 292], [299, 327],
            [332, 362], [364, 376], [382, 390], [393, 397], [410, 414], [418, 421], [424, 430], [436, 449],
            [454, 461], [464, 467], [471, 475], [479, 482], [484, 494]])
    }
];

function stepPath(g) {
    let d = `M0 ${g.base + 0.5}`;
    [...g.steps].sort((a, b) => a[0] - b[0]).forEach(([a, b, y]) => {
        d += `H${a + 0.5}V${y + 0.5}H${b + 0.5}V${g.base + 0.5}`;
    });
    return d + 'H494';
}

document.getElementById('graphs').innerHTML = graphs.map(g => {
    let grid = '';
    for (let x = g.gridX; x < 494; x += 20) grid += `M${x + 0.5} 0V140`;
    for (let y = g.gridY; y < 140; y += 20) grid += `M0 ${y + 0.5}H494`;
    const d = stepPath(g);
    return `
    <section class="window graph" style="top:${g.top}px">
        <h2 class="title inactive">${g.title}</h2>
        <div class="graph-body">
            <div class="plot"><svg>
                <path d="${d}V140H0Z" fill="${g.fill}"/>
                <path d="${grid}" stroke="#a9c3ea" fill="none"/>
                <path d="${d}" stroke="${g.line}" fill="none"/>
            </svg></div>
            <div class="plot-side">
                <input type="text" value="${g.max}" aria-label="Maximum">
                <div class="swatches"><span style="background:${g.line}"></span><span></span></div>
                <input class="now" type="text" value="${g.now}" aria-label="Current" readonly>
                <button type="button">Fit y</button>
                <input type="text" value="${g.min}" aria-label="Minimum">
            </div>
        </div>
    </section>`;
}).join('');

// GPU-Z rows: label, value, bar height in %
const gpuz = [
    ['GPU Clock', '885.0 MHz', 60], ['Memory Clock', '1500.2 MHz', 60], ['GPU Temperature', '57.0 °C', 45],
    ['Memory Used', '368 MB', 6], ['GPU Load', '2 %', 0], ['Memory Controller Load', '0 %', 0],
    ['Video Engine Load', '0 %', 0], ['Bus Interface Load', '0 %', 0], ['PerfCap Reason', 'Idle', 100],
    ['VDDC', '0.6060 V', 12], ['CPU Temperature', '95.0 °C', 90], ['System Memory Used', '5153 MB', 24]
];

document.getElementById('gpuzRows').innerHTML = gpuz.map(([name, value, pct]) => `
    <div class="gpuz-row">
        <select aria-label="Sensor"><option>${name}</option></select>
        <output>${value}</output>
        <div class="gauge"><i class="${value === 'Idle' ? 'idle' : ''}" style="height:${pct}%"></i></div>
    </div>`).join('');

document.getElementById('coreBars').innerHTML += [0, 1, 2, 3, 4, 5].map(n => `
    <span class="core-no ${n === 3 ? 'hot' : ''}">${n}</span><span class="core-bar"></span>`).join('');
```
